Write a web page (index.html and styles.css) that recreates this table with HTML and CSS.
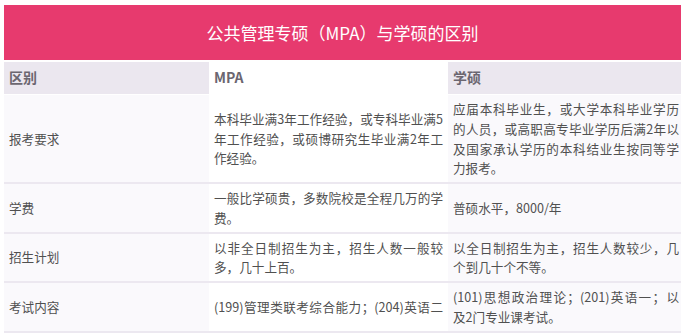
FILE: index.html
```html
<!DOCTYPE html>
<html lang="zh-CN">
<head>
<meta charset="utf-8">
<title>公共管理专硕（MPA）与学硕的区别</title>
<link rel="stylesheet" href="styles.css">
</head>
<body>
<div class="wrap">
  <div class="title">公共管理专硕（MPA）与学硕的区别</div>
  <div class="cmp">
    <div class="row head">
      <div class="cell shade">区别</div>
      <div class="cell">MPA</div>
      <div class="cell shade">学硕</div>
    </div>
    <div class="row">
      <div class="cell shade"><div class="t">报考要求</div></div>
      <div class="cell"><div class="t"><span class="j">本科毕业满3年工作经验，或专科毕业满5</span><span class="j">年工作经验，或硕博研究生毕业满2年工</span><span class="l">作经验。</span></div></div>
      <div class="cell shade"><div class="t"><span class="j">应届本科毕业生，或大学本科毕业学历</span><span class="j">的人员，或高职高专毕业学历后满2年以</span><span class="j">及国家承认学历的本科结业生按同等学</span><span class="l">力报考。</span></div></div>
    </div>
    <div class="row">
      <div class="cell shade"><div class="t">学费</div></div>
      <div class="cell"><div class="t"><span class="j">一般比学硕贵，多数院校是全程几万的学</span><span class="l">费。</span></div></div>
      <div class="cell shade"><div class="t">普硕水平，8000/年</div></div>
    </div>
    <div class="row">
      <div class="cell shade"><div class="t">招生计划</div></div>
      <div class="cell"><div class="t"><span class="j">以非全日制招生为主，招生人数一般较</span><span class="l">多，几十上百。</span></div></div>
      <div class="cell shade"><div class="t"><span class="j">以全日制招生为主，招生人数较少，几</span><span class="l">个到几十个不等。</span></div></div>
    </div>
    <div class="row">
      <div class="cell shade"><div class="t">考试内容</div></div>
      <div class="cell"><div class="t"><span class="j">(199)管理类联考综合能力；(204)英语二</span></div></div>
      <div class="cell shade"><div class="t"><span class="j">(101)思想政治理论；(201)英语一；以</span><span class="l">及2门专业课考试。</span></div></div>
    </div>
  </div>
</div>
</body>
</html>
```

FILE: styles.css
```css
* { box-sizing: border-box; }
html, body { margin: 0; padding: 0; background: #fff; }
body {
  font-family: "Noto Sans CJK SC", "Noto Sans", sans-serif;
  color: #505050;
}
.wrap {
  width: 677px;
  margin: 5px 0 0 4px;
}
.title {
  height: 55px;
  background: #e73a6e;
  color: #fff;
  font-size: 17px;
  display: flex;
  align-items: center;
  justify-content: center;
  margin-bottom: 2px;
}
.row {
  display: grid;
  grid-template-columns: 205px 239px 233px;
  border-bottom: 2px solid #ece8f0;
}
.cell {
  display: flex;
  align-items: center;
  padding: 4px 5px;
  font-size: 12.6px;
  line-height: 19.75px;
  background: #fff;
}
.cell:last-child { padding-right: 2px; }
.cell.shade { background: #faf9fc; }
.t { width: 100%; }
.j {
  display: block;
  text-align: justify;
  text-align-last: justify;
}
.l { display: block; }
.row.head {
  height: 33px;
  border-bottom: 1px solid #fff;
}
.row.head .cell {
  padding: 0 5px;
  font-size: 14px;
  font-weight: bold;
  color: #6b6670;
}
.row.head .cell.shade { background: #ebe7ef; }
```
